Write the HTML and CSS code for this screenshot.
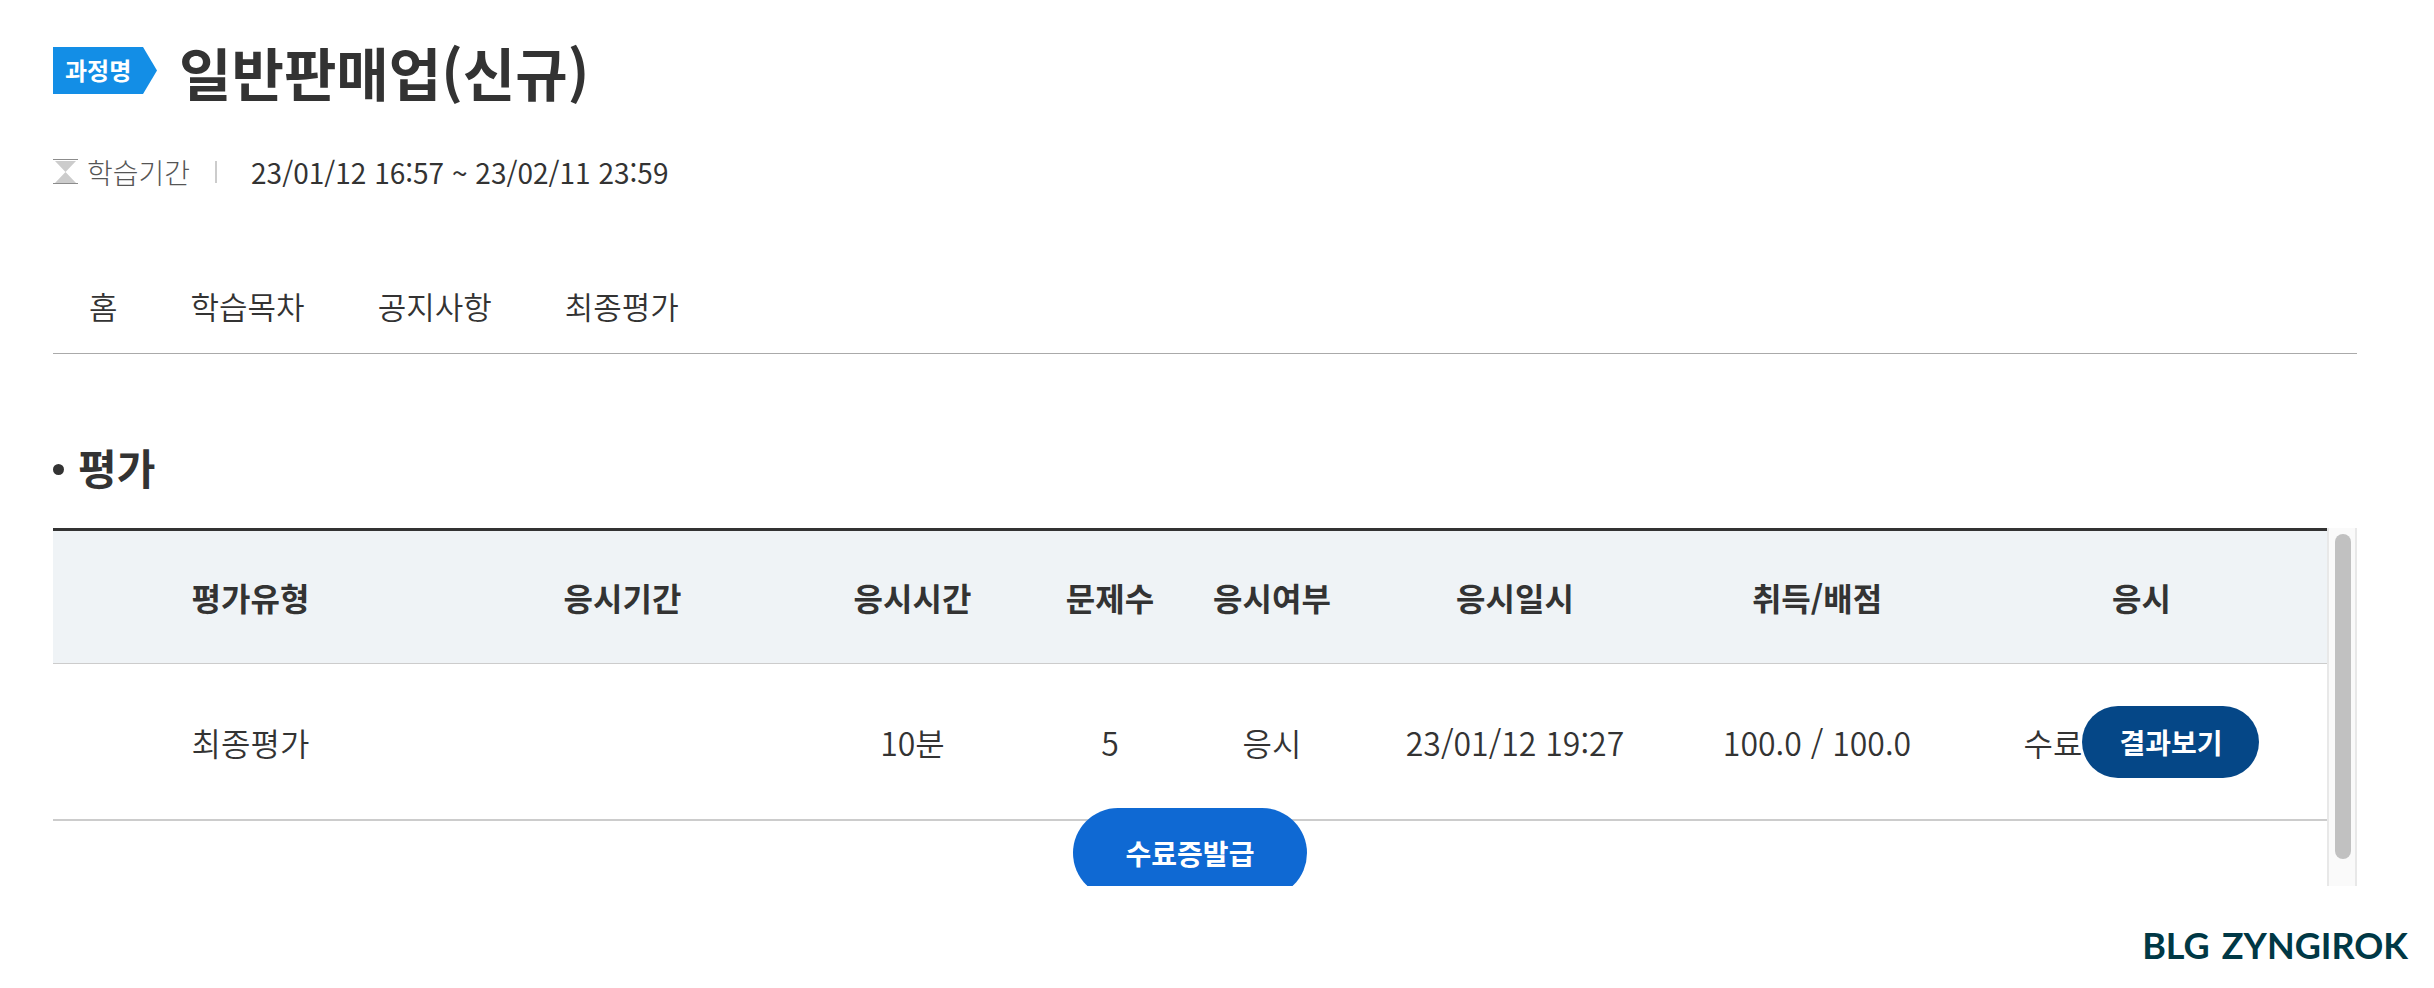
FILE: index.html
```html
<!DOCTYPE html>
<html lang="ko">
<head>
<meta charset="utf-8">
<title>일반판매업(신규)</title>
<link rel="stylesheet" href="styles.css">
</head>
<body>
<main class="page">
  <header class="course">
    <span class="badge">과정명</span>
    <h1 class="course-title">일반판매업(신규)</h1>
  </header>
  <div class="period">
    <svg class="hourglass" viewBox="0 0 25 26" aria-hidden="true">
      <path d="M2 2h21L12.500 13zM2 24h21L12.500 13z" fill="#ccc"/>
      <path d="M0 .5h25M0 24.500h25" stroke="#8c8c8c" stroke-width="1"/>
    </svg>
    <span class="period-label">학습기간</span>
    <span class="period-value">23/01/12 16:57 ~ 23/02/11 23:59</span>
  </div>
  <nav class="tabs">
    <a href="#">홈</a>
    <a href="#">학습목차</a>
    <a href="#">공지사항</a>
    <a href="#">최종평가</a>
  </nav>
  <h2 class="section-title">평가</h2>
  <section class="panel">
    <div class="panel-body">
      <table class="exams">
        <colgroup>
          <col class="c-type"><col class="c-period"><col class="c-time"><col class="c-count">
          <col class="c-taken"><col class="c-date"><col class="c-score"><col class="c-action">
        </colgroup>
        <thead>
          <tr><th>평가유형</th><th>응시기간</th><th>응시시간</th><th>문제수</th><th>응시여부</th><th>응시일시</th><th>취득/배점</th><th>응시</th></tr>
        </thead>
        <tbody>
          <tr>
            <td>최종평가</td><td></td><td>10분</td><td>5</td><td>응시</td><td>23/01/12 19:27</td><td>100.0 / 100.0</td>
            <td><div class="result"><span>수료</span><button class="btn-result" type="button">결과보기</button></div></td>
          </tr>
        </tbody>
      </table>
      <div class="issue"><button class="btn-issue" type="button">수료증발급</button></div>
    </div>
    <div class="scrollbar" aria-hidden="true"><div class="thumb"></div></div>
  </section>
</main>
<footer class="brand"><span>BLG</span> <span>ZYNGIROK</span></footer>
</body>
</html>
```

FILE: styles.css
```css
* { box-sizing: border-box; }

body {
  margin: 0;
  background: #fff;
  color: #333;
  font-family: "Noto Sans CJK KR", sans-serif;
  font-size: 32px;
  line-height: 48px;
}

button { font-family: inherit; border: 0; padding: 0; color: #fff; font-weight: 700; font-size: 28px; }

.page { padding: 32px 77px 0 53px; }

.course { display: flex; align-items: center; gap: 22px; height: 80px; }
.badge {
  width: 104px;
  height: 47px;
  margin-bottom: 3px;
  padding-left: 12px;
  background: #138ee6;
  clip-path: polygon(0 0, 90px 0, 100% 50%, 90px 100%, 0 100%);
  color: #fff;
  font-size: 24px;
  font-weight: 700;
  line-height: 46px;
}
.course-title { margin: 0; padding-bottom: 2px; font-size: 57px; font-weight: 700; line-height: 78px; }

.period { display: flex; align-items: center; margin-top: 36px; }
.hourglass { width: 25px; height: 26px; }
.period-label { margin-left: 9px; color: #555; font-size: 28px; font-weight: 300; }
.period-value { display: flex; align-items: center; font-size: 28px; }
.period-value::before { content: ""; width: 2px; height: 22px; margin: 0 34px 0 25px; background: #ccc; }

.tabs { display: flex; gap: 73px; margin-top: 86px; padding: 0 36px 23px; border-bottom: 1px solid #aaa; font-size: 31px; font-weight: 350; }
.tabs a { color: inherit; text-decoration: none; }

.section-title { display: flex; align-items: center; gap: 14px; margin: 82px 0 0; font-size: 42px; font-weight: 700; line-height: 62px; }
.section-title::before { content: ""; width: 11px; height: 11px; margin-top: 4px; border-radius: 50%; background: #333; }

.panel { display: flex; height: 358px; margin-top: 30px; overflow: hidden; }
.panel-body { flex: 1; }

.exams { width: 100%; table-layout: fixed; border-collapse: separate; border-spacing: 0; border-top: 3px solid #333; text-align: center; }
.exams th { height: 133px; padding: 0; background: #eff3f6; border-bottom: 1px solid #ccc; font-weight: 700; }
.exams td { height: 157px; padding: 0; border-bottom: 2px solid #ccc; font-weight: 350; }
.c-type { width: 395px; }
.c-period { width: 349px; }
.c-time { width: 231px; }
.c-count { width: 164px; }
.c-taken { width: 160px; }
.c-date { width: 326px; }
.c-score { width: 278px; }
.c-action { width: 371px; }

.result { display: flex; justify-content: center; align-items: center; }
.btn-result { width: 177px; height: 72px; border-radius: 36px; background: #054787; }

.issue { display: flex; justify-content: center; margin-top: -13px; position: relative; }
.btn-issue { width: 234px; height: 90px; border-radius: 45px; background: #0f69d3; }

.scrollbar { width: 30px; padding: 6px 4px 0 6px; background: #fafafa; border: solid #e8e8e8; border-width: 0 2px; }
.thumb { width: 16px; height: 325px; border-radius: 8px; background: #c1c1c1; }

.brand { display: flex; justify-content: flex-end; gap: 12px; margin-top: 35px; padding-right: 26px; color: #003845; font-family: Lato, sans-serif; font-size: 36px; font-weight: 700; }
```
